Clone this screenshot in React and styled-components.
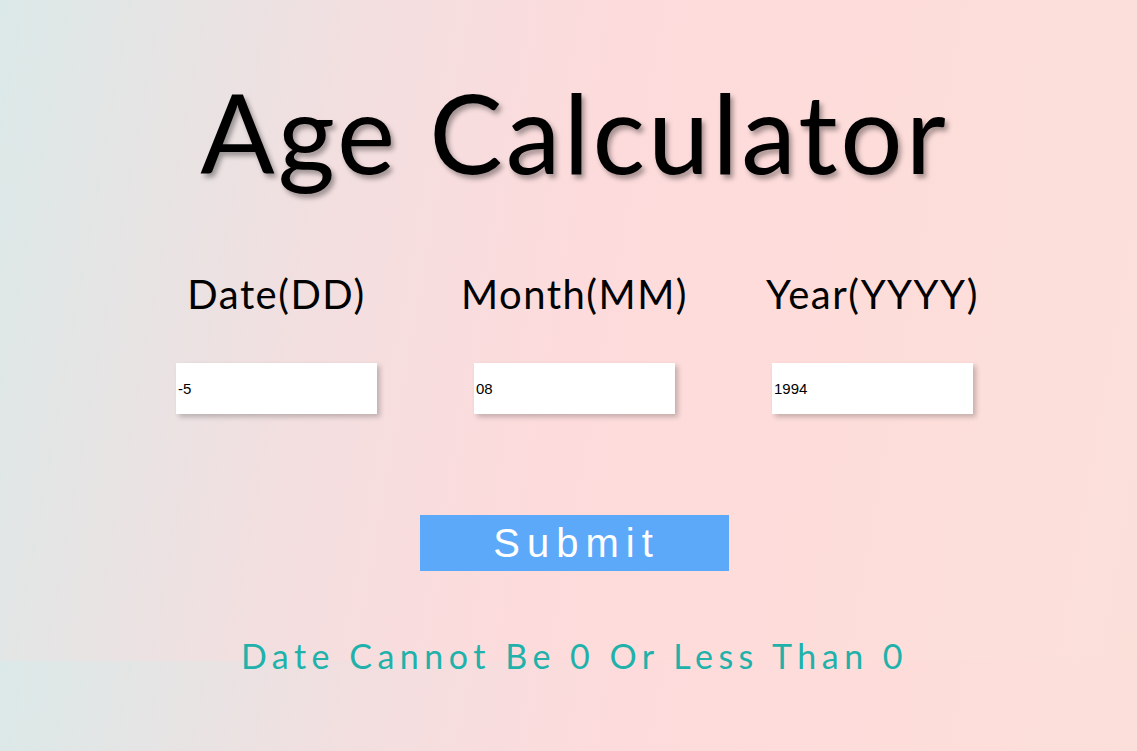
import React, { useState } from "react";
import styled, { createGlobalStyle } from "styled-components";

const Global = createGlobalStyle`
  html {
    height: 661px;
    background: linear-gradient(100deg, #dbe9e8 0%, #f2dfe0 28%, #fddbdc 50%, #fdddda 75%, #fbe0da 100%);
  }
  body {
    margin: 0;
    font-family: Lato, "Noto Sans", sans-serif;
  }
`;

const Page = styled.main`
  display: flex;
  flex-direction: column;
  align-items: center;
  padding-left: 12px;
`;

const Title = styled.h1`
  margin: 76px 0 0;
  font-size: 110px;
  line-height: 1;
  font-weight: 400;
  color: #000;
  letter-spacing: 3px;
  text-shadow: 3px 4px 5px rgba(0, 0, 0, 0.35);
`;

const Fields = styled.div`
  display: grid;
  grid-template-columns: repeat(3, 298px);
  margin-top: 88px;
`;

const Field = styled.div`
  display: flex;
  flex-direction: column;
  align-items: center;
`;

const Label = styled.label`
  font-size: 40px;
  line-height: 1;
  color: #000;
  letter-spacing: 1.5px;
`;

const Input = styled.input`
  margin-top: 49px;
  width: 201px;
  height: 51px;
  box-sizing: border-box;
  border: none;
  outline: none;
  padding: 0 2px;
  background: #fff;
  font-family: Arial, "Liberation Sans", sans-serif;
  font-size: 15px;
  color: #000;
  box-shadow: 3px 3px 5px rgba(0, 0, 0, 0.22);
`;

const Submit = styled.button`
  margin-top: 101px;
  width: 309px;
  height: 56px;
  border: none;
  background: #5ca9fa;
  color: #fff;
  font-family: Arial, "Liberation Sans", sans-serif;
  font-size: 40px;
  letter-spacing: 7px;
  padding: 0 0 0 4px;
  cursor: pointer;
`;

const Message = styled.p`
  margin: 68px 0 0;
  font-size: 34px;
  line-height: 1;
  letter-spacing: 5.5px;
  color: #20b2aa;
`;

export default function App() {
  const [d, setD] = useState("-5");
  const [m, setM] = useState("08");
  const [y, setY] = useState("1994");
  return (
    <>
      <Global />
      <Page>
        <Title>Age Calculator</Title>
        <Fields>
          <Field>
            <Label>Date(DD)</Label>
            <Input value={d} onChange={(e) => setD(e.target.value)} />
          </Field>
          <Field>
            <Label>Month(MM)</Label>
            <Input value={m} onChange={(e) => setM(e.target.value)} />
          </Field>
          <Field>
            <Label>Year(YYYY)</Label>
            <Input value={y} onChange={(e) => setY(e.target.value)} />
          </Field>
        </Fields>
        <Submit>Submit</Submit>
        <Message>Date Cannot Be 0 Or Less Than 0</Message>
      </Page>
    </>
  );
}
